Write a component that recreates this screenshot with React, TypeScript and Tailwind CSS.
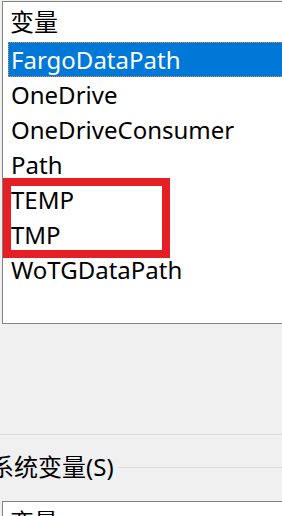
const vars = [
  "FargoDataPath",
  "OneDrive",
  "OneDriveConsumer",
  "Path",
  "TEMP",
  "TMP",
  "WoTGDataPath",
];

const font = { fontFamily: '"Segoe UI", "Noto Sans", "Noto Sans CJK SC", sans-serif' };

export default function App() {
  return (
    <div
      className="relative h-[516px] w-[282px] overflow-hidden bg-[#f0f0f0] text-[24px] leading-none text-black"
      style={font}
    >
      {/* user variables list */}
      <div className="ml-[2px] mt-[1px] h-[323px] w-[400px] border border-[#838383] bg-white">
        <div className="flex h-[40px] items-center pl-[7px]">变量</div>
        <div className="pl-[5px]">
          {vars.map((v, i) => (
            <div
              key={v}
              className={
                i === 0
                  ? "flex h-[35px] items-center border border-dotted border-[#f08c34] bg-[#0078d7] pl-[2px] text-white"
                  : "flex h-[35px] items-center border border-transparent pl-[2px]"
              }
            >
              {v}
            </div>
          ))}
        </div>
      </div>

      {/* annotation */}
      <div className="absolute left-[3px] top-[178px] h-[80px] w-[167px] border-[8px] border-[#e61e25]" />

      <div className="mt-[110px] border-t border-[#dadada]" />

      {/* system variables */}
      <div className="ml-[-10px] mt-[20px] flex h-[24px] items-center">
        <span className="whitespace-nowrap">系统变量(S)</span>
        <div className="ml-[4px] h-px flex-1 bg-[#dcdcdc]" />
      </div>
      <div className="ml-[2px] mt-[22px] h-[100px] w-[400px] border border-[#838383] bg-white">
        <div className="flex h-[40px] items-center pl-[7px]">变量</div>
      </div>
    </div>
  );
}
